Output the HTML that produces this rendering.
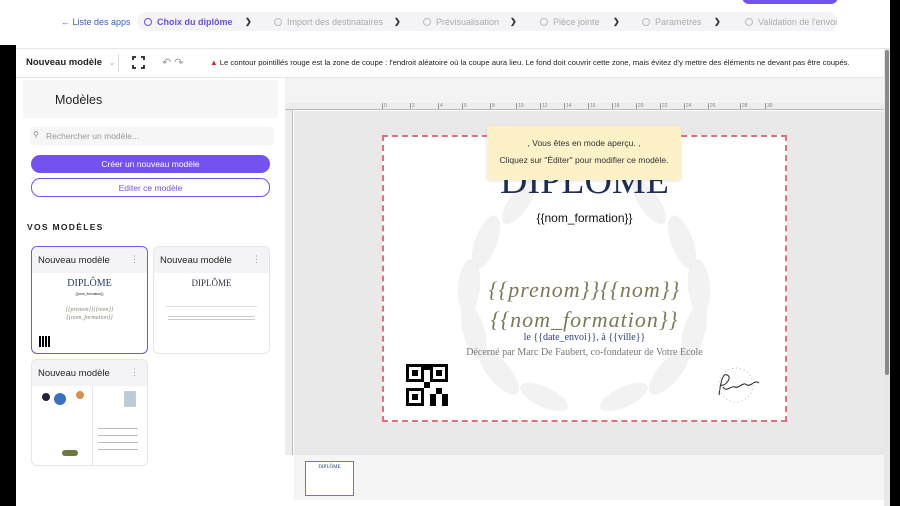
<!DOCTYPE html>
<html><head><meta charset="utf-8"><style>
*{margin:0;padding:0;box-sizing:border-box}
body{width:900px;height:506px;overflow:hidden;background:#fff;font-family:"Liberation Sans",sans-serif;position:relative;color:#222}
.a{position:absolute}
.step{position:absolute;top:17px;font-size:9px;color:#aaa;white-space:nowrap}
.circ{display:inline-block;width:8px;height:8px;border:1px solid #bbb;border-radius:50%;vertical-align:-1px;margin-right:5px}
.chev{position:absolute;top:17px;font-size:8px;color:#333;font-weight:bold}
.card{position:absolute;background:#fff;border:1px solid #e5e5e8;border-radius:6px;overflow:hidden}
.card .h{height:26px;background:#f4f4f7;font-size:9.5px;padding:8px 0 0 6px;color:#222;position:relative}
.card .h:after{content:"⋮";position:absolute;right:8px;top:7px;color:#999;font-size:9px}
.serif{font-family:"Liberation Serif",serif}
.tick{position:absolute;top:103px;height:6px;border-left:1px solid #999;font-size:5px;color:#888;padding-left:1px}
</style></head><body>
<div class="a" style="left:742px;top:-10px;width:96px;height:14px;background:#7452f0;border-radius:8px"></div>
<div class="a" style="left:61px;top:17px;font-size:9px;color:#3b5bcc">← Liste des apps</div>
<div class="a" style="left:137px;top:12px;width:700px;height:19px;background:#f4f4f6;border-radius:10px"></div>
<div class="step" style="left:144px;color:#6a4fe0;font-weight:bold"><span class="circ" style="border-color:#6a4fe0"></span>Choix du diplôme</div>
<div class="chev" style="left:245px">❯</div>
<div class="step" style="left:274px"><span class="circ"></span>Import des destinataires</div>
<div class="chev" style="left:394px">❯</div>
<div class="step" style="left:423px"><span class="circ"></span>Prévisualisation</div>
<div class="chev" style="left:510px">❯</div>
<div class="step" style="left:540px"><span class="circ"></span>Pièce jointe</div>
<div class="chev" style="left:613px">❯</div>
<div class="step" style="left:642px"><span class="circ"></span>Paramètres</div>
<div class="chev" style="left:714px">❯</div>
<div class="step" style="left:745px"><span class="circ"></span>Validation de l'envoi</div>
<div class="a" style="left:0;top:45px;width:16px;height:461px;background:#000"></div>
<div class="a" style="left:890px;top:0;width:10px;height:506px;background:#000"></div>
<div class="a" style="left:16px;top:48px;width:874px;height:30px;background:#fff;border-top:1px solid #e6e6e6;border-bottom:1px solid #e6e6e6"></div>
<div class="a" style="left:26px;top:57px;font-size:9.5px;font-weight:bold">Nouveau modèle <span style="color:#aaa;font-weight:normal;font-size:8px;margin-left:4px">⌄</span></div>
<div class="a" style="left:118px;top:54px;width:1px;height:18px;background:#ddd"></div>
<svg class="a" style="left:132px;top:56px" width="13" height="13" viewBox="0 0 13 13" fill="none" stroke="#222" stroke-width="1.8"><path d="M1 4V1h3M9 1h3v3M12 9v3H9M4 12H1V9"/></svg>
<div class="a" style="left:162px;top:56px;font-size:11px;color:#999">↶ ↷</div>
<div class="a" style="left:210px;top:58px;font-size:7.7px;color:#222;white-space:nowrap"><span style="color:#d22">▲</span> Le contour pointillés rouge est la zone de coupe : l'endroit aléatoire où la coupe aura lieu. Le fond doit couvrir cette zone, mais évitez d'y mettre des éléments ne devant pas être coupés.</div>
<div class="a" style="left:16px;top:78px;width:269px;height:428px;background:#fff"></div>
<div class="a" style="left:23px;top:80px;width:255px;height:38px;background:#f7f7f8"></div>
<div class="a" style="left:55px;top:93px;font-size:12.5px;color:#222">Modèles</div>
<div class="a" style="left:30px;top:127px;width:244px;height:18px;background:#f6f6f7;border-radius:4px;font-size:8.5px;color:#999;padding:4px 0 0 16px">Rechercher un modèle...</div>
<div class="a" style="left:33px;top:130px;font-size:8px;color:#888">⚲</div>
<div class="a" style="left:31px;top:155px;width:239px;height:18px;background:#7452f0;border-radius:9px;color:#fff;font-size:8.5px;text-align:center;padding-top:4px">Créer un nouveau modèle</div>
<div class="a" style="left:31px;top:178px;width:239px;height:19px;border:1px solid #7452f0;border-radius:9px;color:#7452f0;font-size:8.5px;text-align:center;padding-top:4px">Editer ce modèle</div>
<div class="a" style="left:27px;top:222px;font-size:8.5px;font-weight:bold;letter-spacing:1.3px;color:#222">VOS MODÈLES</div>
<div class="card" style="left:31px;top:246px;width:117px;height:108px;border:1.5px solid #7452f0">
 <div class="h">Nouveau modèle</div>
 <div class="serif" style="text-align:center;color:#223a66;font-size:10px;margin-top:5px">DIPLÔME</div>
 <div style="text-align:center;font-size:3.5px;margin-top:3px">{{nom_formation}}</div>
 <div class="serif" style="text-align:center;font-style:italic;color:#887;font-size:6px;margin-top:10px;line-height:8px">{{prenom}}{{nom}}<br>{{nom_formation}}</div>
 <div style="position:absolute;left:7px;top:89px;width:11px;height:11px;background:repeating-linear-gradient(90deg,#000 0 2px,#fff 2px 3px)"></div>
</div>
<div class="card" style="left:153px;top:246px;width:117px;height:108px">
 <div class="h">Nouveau modèle</div>
 <div class="serif" style="text-align:center;color:#334;font-size:9px;margin-top:5px">DIPLÔME</div>
 <div style="margin:18px 12px 0;height:1px;background:#ddd"></div>
 <div style="margin:9px 14px 0;height:5px;background:repeating-linear-gradient(#ccc 0 1px,#fff 1px 3px)"></div>
</div>
<div class="card" style="left:31px;top:359px;width:117px;height:107px">
 <div class="h">Nouveau modèle</div>
 <div style="position:absolute;left:10px;top:33px;width:8px;height:8px;border-radius:50%;background:#223"></div>
 <div style="position:absolute;left:22px;top:33px;width:12px;height:12px;border-radius:50%;background:#3b6fc4"></div>
 <div style="position:absolute;left:44px;top:31px;width:8px;height:8px;border-radius:50%;background:#d89050"></div>
 <div style="position:absolute;left:60px;top:26px;width:1px;height:80px;background:#e4e4e4"></div>
 <div style="position:absolute;left:92px;top:31px;width:12px;height:16px;background:#bcd;border:1px solid #ccc"></div>
 <div style="position:absolute;left:66px;top:62px;width:40px;height:30px;background:repeating-linear-gradient(#fff 0 6px,#bbb 6px 7px)"></div>
 <div style="position:absolute;left:30px;top:90px;width:16px;height:6px;background:#6a7a40;border-radius:3px"></div>
</div>
<div class="a" style="left:285px;top:78px;width:599px;height:25px;background:#f3f3f4"></div>
<div class="a" style="left:285px;top:103px;width:599px;height:7px;background:#ededee;border-bottom:1px solid #bbb"></div>
<div class="a" style="left:285px;top:110px;width:8px;height:345px;background:#ededee;border-right:1px solid #bbb"></div>
<div class="a" style="left:294px;top:111px;width:590px;height:344px;background:#e9e9ea"></div>
<div class="tick" style="left:382px">0</div><div class="tick" style="left:410px">2</div><div class="tick" style="left:438px">4</div><div class="tick" style="left:462px">6</div><div class="tick" style="left:490px">8</div><div class="tick" style="left:516px">10</div><div class="tick" style="left:540px">12</div><div class="tick" style="left:564px">14</div><div class="tick" style="left:588px">16</div><div class="tick" style="left:612px">18</div><div class="tick" style="left:636px">20</div><div class="tick" style="left:660px">22</div><div class="tick" style="left:684px">24</div><div class="tick" style="left:708px">26</div><div class="tick" style="left:740px">28</div><div class="tick" style="left:765px">30</div>
<div class="a" style="left:884px;top:48px;width:6px;height:458px;background:#e8e8e8"></div>
<div class="a" style="left:885px;top:50px;width:4px;height:325px;background:#8a8a8a;border-radius:2px"></div>
<div class="a" style="left:382px;top:135px;width:405px;height:287px;background:#fff;border:2.5px dashed #e07080;overflow:hidden">
 <svg style="position:absolute;left:40px;top:25px" width="320" height="260" viewBox="0 0 320 260"><g fill="#f2f2f2">
  <ellipse cx="95" cy="40" rx="10" ry="26" transform="rotate(35 95 40)"/>
  <ellipse cx="62" cy="80" rx="11" ry="28" transform="rotate(20 62 80)"/>
  <ellipse cx="45" cy="125" rx="11" ry="28" transform="rotate(5 45 125)"/>
  <ellipse cx="50" cy="170" rx="11" ry="28" transform="rotate(-15 50 170)"/>
  <ellipse cx="75" cy="210" rx="11" ry="28" transform="rotate(-40 75 210)"/>
  <ellipse cx="120" cy="235" rx="10" ry="26" transform="rotate(-65 120 235)"/>
  <ellipse cx="225" cy="40" rx="10" ry="26" transform="rotate(-35 225 40)"/>
  <ellipse cx="258" cy="80" rx="11" ry="28" transform="rotate(-20 258 80)"/>
  <ellipse cx="275" cy="125" rx="11" ry="28" transform="rotate(-5 275 125)"/>
  <ellipse cx="270" cy="170" rx="11" ry="28" transform="rotate(15 270 170)"/>
  <ellipse cx="245" cy="210" rx="11" ry="28" transform="rotate(40 245 210)"/>
  <ellipse cx="200" cy="235" rx="10" ry="26" transform="rotate(65 200 235)"/>
 </g></svg>
 <div class="serif" style="position:absolute;left:0;right:0;top:22px;text-align:center;font-size:38px;color:#1d2f55">DIPLÔME</div>
 <div style="position:absolute;left:0;right:0;top:74px;text-align:center;font-size:12px;color:#111">{{nom_formation}}</div>
 <div class="serif" style="position:absolute;left:0;right:0;top:140px;text-align:center;font-size:22px;font-style:italic;color:#7a7a58;letter-spacing:1px">{{prenom}}{{nom}}</div>
 <div class="serif" style="position:absolute;left:0;right:0;top:170px;text-align:center;font-size:22px;font-style:italic;color:#7a7a58;letter-spacing:1px">{{nom_formation}}</div>
 <div class="serif" style="position:absolute;left:0;right:0;top:195px;text-align:center;font-size:10px;color:#2a3f7a">le {{date_envoi}}, à {{ville}}</div>
 <div class="serif" style="position:absolute;left:0;right:0;top:210px;text-align:center;font-size:10px;color:#777">Décerné par Marc De Faubert, co-fondateur de Votre Ecole</div>
 <svg style="position:absolute;left:22px;top:227px" width="42" height="42" viewBox="0 0 7 7" shape-rendering="crispEdges"><path fill="#000" d="M0 0h3v3H0zM4 0h3v3H4zM0 4h3v3H0zM3 3h1v1H3zM5 4h1v1H5zM4 5h1v2H4zM6 5h1v2H6zM3 0h1v1H3z"/><path fill="#fff" d="M.5.5h2v2h-2zM4.5.5h2v2h-2zM.5 4.5h2v2h-2z"/><path fill="#000" d="M1 1h1v1H1zM5 1h1v1H5zM1 5h1v1H1z"/></svg>
 <svg style="position:absolute;left:325px;top:228px" width="55" height="40" viewBox="0 0 55 40" fill="none" stroke="#222" stroke-width="1"><path d="M10 30 C12 15 14 8 18 10 C24 12 16 22 12 20 M14 22 C18 28 22 20 26 22 C30 24 34 16 38 20 C42 22 46 14 50 18"/><circle cx="27" cy="20" r="17" stroke="#bbb" stroke-dasharray="1 3"/></svg>
</div>
<div class="a" style="left:487px;top:126px;width:194px;height:54px;background:#fdf1c8;border-radius:4px;box-shadow:0 1px 3px rgba(0,0,0,.12);font-size:8.5px;color:#333;text-align:center;line-height:17px;padding-top:9px">, Vous êtes en mode aperçu. ,<br>Cliquez sur "Éditer" pour modifier ce modèle.</div>
<div class="a" style="left:294px;top:455px;width:590px;height:45px;background:#f5f5f6"></div>
<div class="a" style="left:305px;top:461px;width:49px;height:35px;background:#fff;border:1.5px solid #7a6ae0;font-family:'Liberation Serif',serif;font-size:5px;color:#223a66;text-align:center;padding-top:3px">DIPLÔME</div>
</body></html>
